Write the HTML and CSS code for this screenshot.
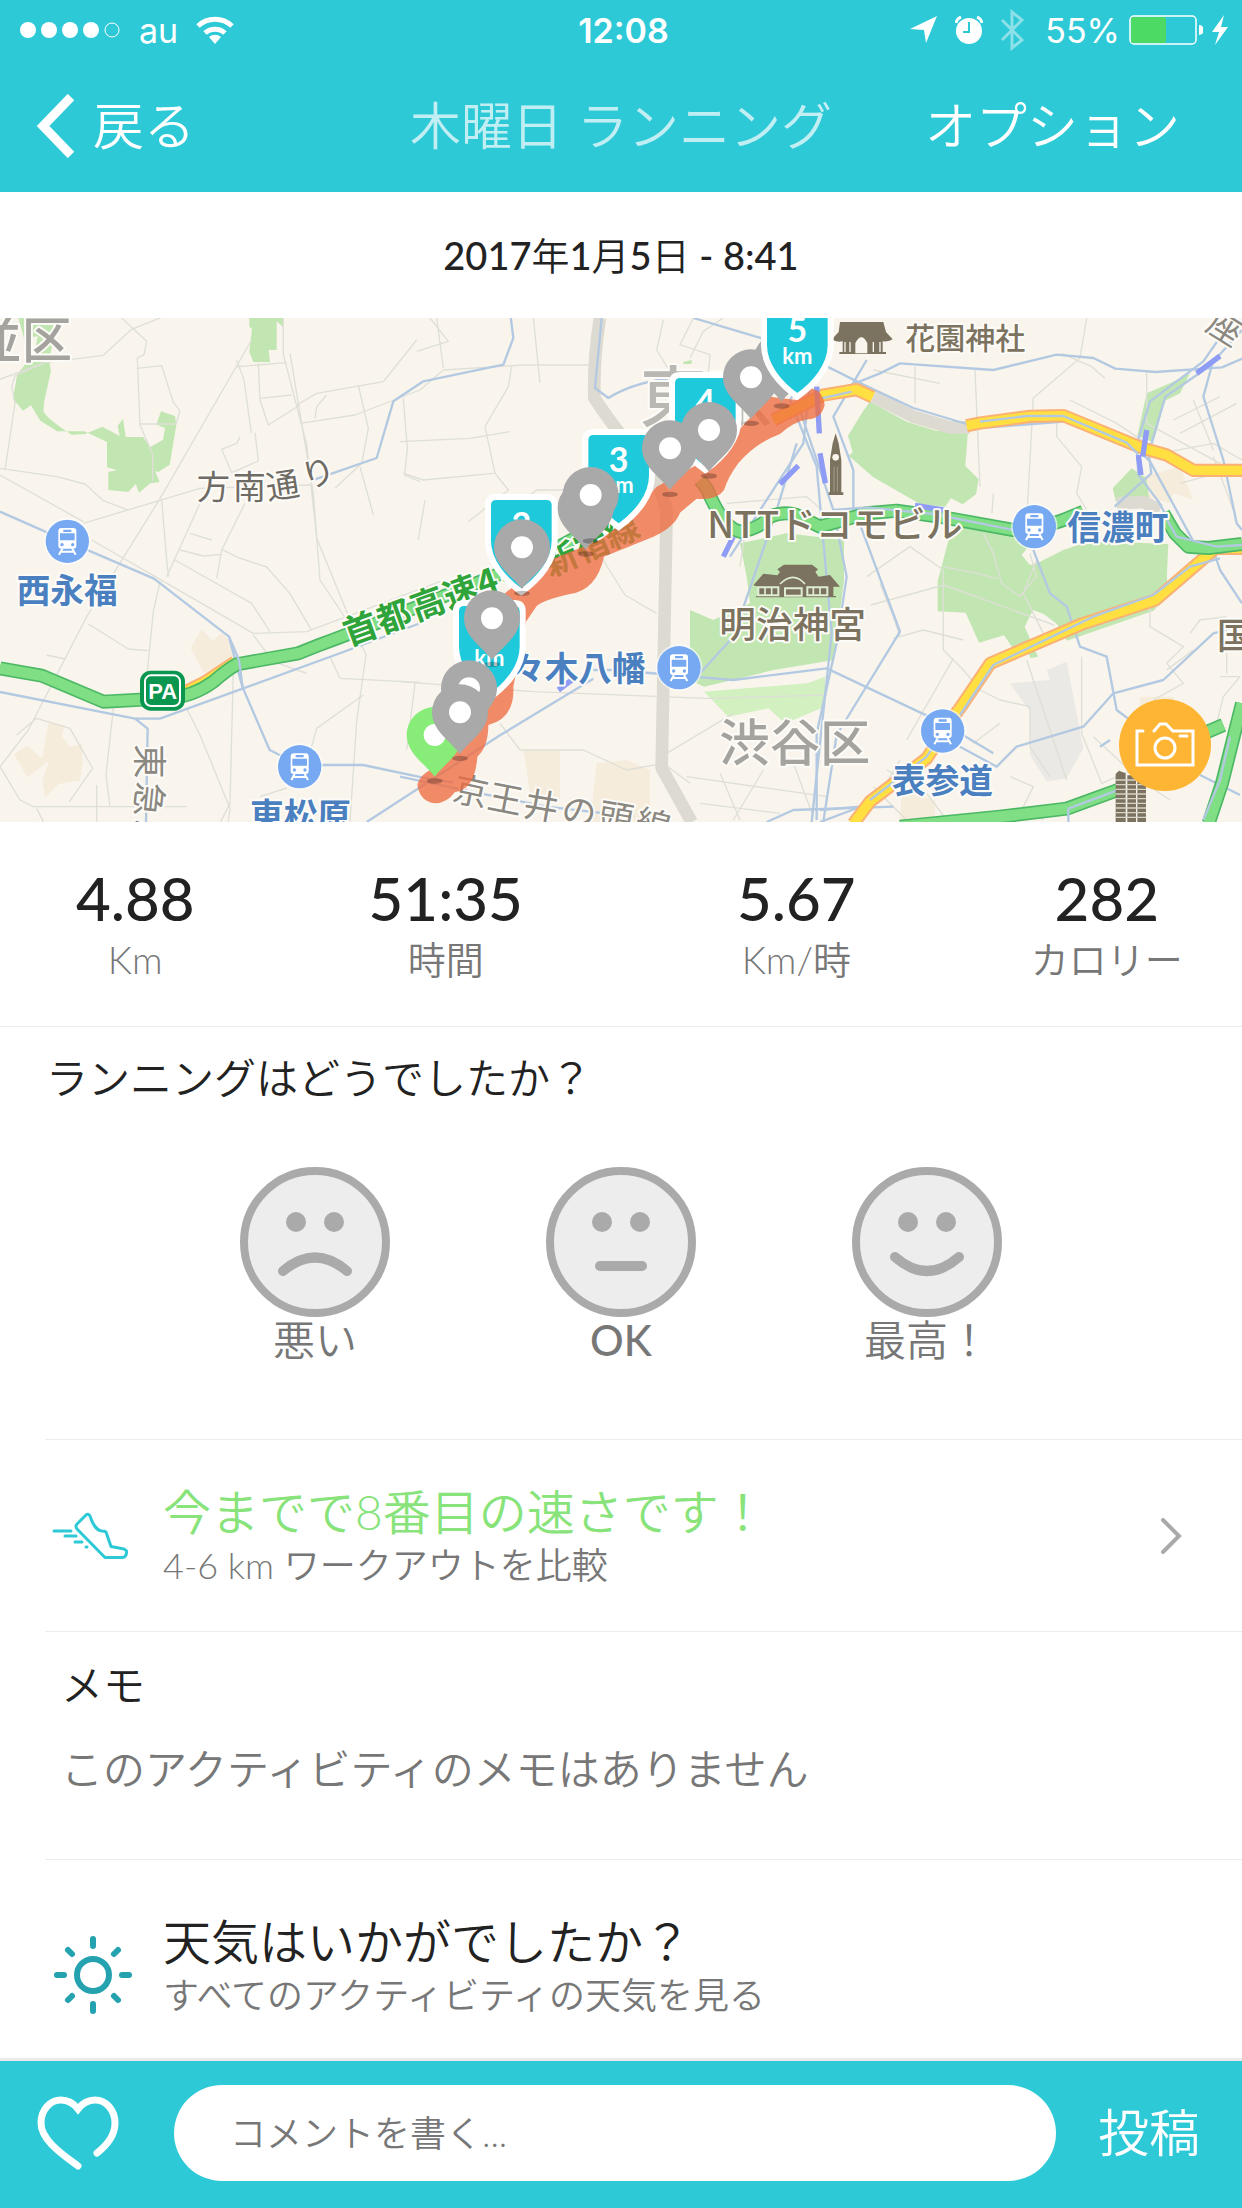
FILE: index.html
```html
<!DOCTYPE html>
<html lang="ja">
<head>
    <meta charset="UTF-8">
    <meta name="viewport" content="width=device-width, initial-scale=1.0">
    <title>木曜日 ランニング</title>
    <link rel="stylesheet" href="styles.css">
</head>
<body>
    <header class="header">
        <div class="status-bar">
            <div class="status-left">
                <svg class="signal" viewBox="0 0 102 18" width="102" height="18">
                    <circle cx="9" cy="9" r="8"/><circle cx="30" cy="9" r="8"/><circle cx="51" cy="9" r="8"/><circle cx="72" cy="9" r="8"/>
                    <circle class="empty" cx="93" cy="9" r="7"/>
                </svg>
                <span>au</span>
                <svg viewBox="0 0 38 28" width="38" height="28">
                    <path d="M2 10a25 25 0 0 1 34 0" fill="none" stroke="#fff" stroke-width="5"/>
                    <path d="M9 17a15 15 0 0 1 20 0" fill="none" stroke="#fff" stroke-width="5"/>
                    <path d="M19 28l-6-7a9 9 0 0 1 12 0z" fill="#fff"/>
                </svg>
            </div>
            <time class="clock">12:08</time>
            <div class="status-right">
                <svg viewBox="0 0 28 28" width="28" height="28"><path d="M0 13L27 0 16 27 14 14z" fill="#fff"/></svg>
                <svg class="alarm" viewBox="0 0 28 28" width="28" height="28">
                    <circle cx="14" cy="15" r="13" fill="#fff"/>
                    <path d="M1 7a8 8 0 0 1 5-6M27 7a8 8 0 0 0-5-6" fill="none" stroke="#fff" stroke-width="3"/>
                    <path d="M14 6v10H8" fill="none" stroke="#2dc9d7" stroke-width="2"/>
                </svg>
                <svg class="bluetooth" viewBox="0 0 24 42" width="24" height="42"><path d="M2 11l20 20-10 8V3l10 8L2 31" fill="none" stroke="#fff" stroke-width="3"/></svg>
                <span>55%</span>
                <svg viewBox="0 0 74 30" width="74" height="30">
                    <rect x="1" y="1" width="66" height="28" rx="4" fill="none" stroke="#fff" stroke-width="1.5"/>
                    <rect x="2" y="2" width="35" height="26" rx="2" fill="#4cd964"/>
                    <path d="M70 10a5 5 0 0 1 0 10z" fill="#fff"/>
                </svg>
                <svg viewBox="0 0 16 30" width="16" height="30"><path d="M12 0L0 17h7L3 30l13-18H9z" fill="#fff"/></svg>
            </div>
        </div>
        <nav class="nav">
            <a class="nav-back" href="#">
                <svg viewBox="0 0 40 64" width="40" height="64"><path d="M35 3L7 32l28 29" fill="none" stroke="#fff" stroke-width="9"/></svg>
                戻る
            </a>
            <h1 class="nav-title">木曜日 ランニング</h1>
            <button class="nav-options" type="button">オプション</button>
        </nav>
    </header>

    <main class="content">
        <p class="date">2017<span>年</span>1<span>月</span>5<span>日</span> - 8:41</p>

        <div class="map">
            <svg class="map-canvas" viewBox="0 24 3726 1512">
                <defs>
                    <g id="station">
                        <circle r="70" fill="#fff" opacity=".6"/>
                        <circle r="65" fill="#76a9f1"/>
                        <rect x="-27" y="-40" width="54" height="62" rx="9" fill="#fff"/>
                        <path d="M-12-35h24v7h-24zM-22-24h44V-3h-44z" fill="#76a9f1"/>
                        <circle cx="-16" cy="10" r="5" fill="#76a9f1"/><circle cx="16" cy="10" r="5" fill="#76a9f1"/>
                        <path d="M-15 22l-10 18M15 22l10 18M-18 31h36" stroke="#fff" stroke-width="6"/>
                    </g>
                    <g id="pin">
                        <ellipse cy="138" rx="24" ry="8" fill="#000" opacity=".25"/>
                        <path d="M0 125C-30 85-84 55-84 0A84 84 0 0 1 84 0C84 55 30 85 0 125z"/>
                        <circle r="33" fill="#fff"/>
                    </g>
                    <path id="shield" d="M-100 34Q-100 9-75 9H75Q100 9 100 34V140C100 200 55 255 0 294C-55 255-100 200-100 140z"/>
                </defs>
                <rect y="24" width="3726" height="1512" fill="#f9f5ed"/>

                <!-- built-up blocks -->
                <g class="block">
                    <path d="M572 1015l32-57 35 35 25-25 45 45-8 40-90 35z"/>
                    <path d="M145 1240l50 5-10 35 25 30 35-8 3 60-8 50-65 10-40 40-8-50 20-60-65 50-40-70 40-25 45 40z"/>
                    <path d="M1570 1320h110v150l-90-20-10-70z"/>
                    <path d="M1790 1360l90-10 70 30v156h-180z"/>
                    <path d="M3430 500l110-30 40 100-60-20-10 30-70-20z"/>
                    <path d="M2705 1440l100 30v66h-105z"/>
                    <path d="M3420 1160l100 0 20 50-120 40z"/>
                </g>
                <path d="M3030 1120l120-10-10-30 60-25 50 260-50 90-60 10-50-80v-130z" fill="#ebe9e5"/>

                <!-- parks -->
                <g class="park">
                    <path d="M55 24h105v60l-12 70 5 28-20 90-3 30q5 20 85 72l40-2 52-22 52 28-6-30 16-22 8 55h52l22 30 38-22 6-35-26-10 14-40 42 14 4 28-20 118-34 22-10-2 14 32-28 4-34 28-10-26-22 24-60-6v-54l26-6-30-8v-76l-68-32h-82l-50-32-28-46-24 16-30-36 12-70 32-44 20-14 10-60-40 10z"/>
                    <path d="M748 24h102l2 30-22-20v86h-24l4 36h-50l-12-30 8-70-8-5z"/>
                    <path d="M2220 700l140-30 172 20v120l-30 240-180 30-210 50-42-20 0-210 70 30 110-50-10-80z"/>
                    <path d="M2588 305l22-30 110 60 90 28 94 0-8 105 40 40-8 45-40 30-35-18-18 25-75-8-140-80-74-65 12-10-14-50z"/>
                    <path d="M2855 655l80-10 110 30 40 35-20 25 25 30 30-10 70-35 80-28 235 10-4 90v60l-40 50-260 90-30-50-40-30-32-12-25 50 40 90-22 5-20-45-28 22-32-46-75 22-40-90-84-4v-90z"/>
                    <path d="M3440 250l70-30 60-30-30 60-45 22-35 125-48-20z"/>
                    <path d="M3395 475l45 30 8 70-100 0-10-40z"/>
                    <path d="M2050 155l25-5v12h-25z"/>
                </g>
                <path d="M2112 1145l310-25 53-20v90l-120 50-50-45-120 25z" fill="#d2f0c0"/>

                <!-- side streets -->
                <g class="street">
                    <path d="M0 208l135-50 175-22 85-78 85-34M365 24l75 70-8 40-20 10 8 200 38 90v80"/>
                    <path d="M485 570l16 190 5 40M35 230l10 50-30 200M135 158l-90 40-10 32M480 815l-20 90-18 180-10 60"/>
                    <path d="M0 475l170 25 85 22 55 50 75 28M0 495l250 140M250 640l350-105 330-10M480 566L260 920 85 1260 0 1370"/>
                    <path d="M755 90L480 566M710 150l22 60 22 160M720 380l-10 20-45 18 30 70 80-35-10-85M775 160l5 110 25 75 95-60M780 265l95-10M710 170l150-12"/>
                    <path d="M850 24v110l70 270 30 280 98 240 50 110-28 200-20 300M870 130l70 420 20 260 100 150"/>
                    <path d="M900 340l165-25 195-75M890 285l60-35 200-35 100-125M1075 225l30 130-20 105-80 75M1080 470l40 145M945 325l5-35 30-35M1210 265l12 150-8 80 46 20"/>
                    <path d="M525 750l230 130 55 85M665 718l50 25 85 28 70 80 65 110M600 580l-100 220M735 580l-70 140-15 85M540 720l70 18 55-5M275 690l330 190 155 90 160-5 400-150"/>
                    <path d="M265 942l120 75 60 5M560 1195l40 80 90 220-5 40M340 1195l-22 200 12 96M0 1370l60 100 40 20h460M50 1275l60-50 100 30 68 120-70 100"/>
                    <path d="M1090 1155l-140 100-25 90M1020 1105l240 12M780 1460l80-26M140 1035l55 12M570 670l65 20M410 175l75-8 35 110 20 25-12 40h-110"/>
                    <path d="M990 1040l30 65M760 975l60 80 100 35M290 1425v110M110 1495l20 40M700 1080l-10 400-28 55"/>
                    <path d="M1290 24l55 70-95 30M1310 24l20 150M1600 24l20 195M1330 180l-70 60M1200 395l210-10 120-20M1330 180l240-15M1455 350l30 140M1455 350l70-120 10-60M1485 490l40 50-120 95"/>
                    <path d="M1210 490l60 20 210-20M1255 690l20-120M1570 165h200M2080 24l-40 80 90 30-10 120M2170 24l-60 40-40 80M1990 30l-20 90 50 80M1530 600l80-60h110"/>
                    <path d="M2180 580l240-20 80 70M1800 735l75 120 95 55M1200 1115l400 30 520 20 360-10M1560 1320l190 0 130 60 110-20 80 60M1245 1120l-25 200M1500 1240l60 80"/>
                    <path d="M2000 1330l200-120M2060 1400l420 60M2100 1480l240 30M2160 1390l60 140M2290 1380l-90 150M2380 1360l60 160M2240 640l-20 130"/>
                    <path d="M2745 170l0 110M2620 180l200 40M3185 130l90 40 40 35M3260 24l-20 120-140 120-20 370M2925 180l15 350M2980 550l-4 60"/>
                    <path d="M3210 270l140 70 90 60M3170 300v80l75 90-15 80 30 50M2600 800l130-90 100 70v240l60 60 50 60 60 30 90 20v120l60 90"/>
                    <path d="M2612 885l220-60 330 120M2680 985l90-25 120 30M2860 1045L2720 1290M3080 1050l120 360M3245 1040v230l60 150 90-40"/>
                    <path d="M2640 820l40 100 20 60M2830 770l100 20 60 16M2950 670l30 60 25 90 55 40 50-60-20-70M3110 750l-40 100 60 120"/>
                    <path d="M3450 890v60l100 60-50 50 50 60-90 50M3570 970l30-40 80-10M3500 1080l80-60M3680 1030l0 60M3660 1100l60 0-50 60-20 80"/>
                    <path d="M3440 180v160l220 120M3520 330l140-70M3540 370l170-90M3480 430l160-30 86 50M3540 520l110-30M3580 270l60 150M3640 440l60 160"/>
                    <path d="M2660 1380l120 70 60 80M2620 1430l100 100M2700 1350l-60 100M2920 1300l80-60M3030 1400l70 30-30 60 60 40M3280 1280l140 130 90 60"/>
                </g>

                <!-- closed and wide roads -->
                <g class="wide-road">
                    <path d="M1800 24q-20 120-17 240 60 90 105 140 90 90 112 200l-15 770 90 162"/>
                    <path d="M2620 260l120 60 110 32h60M3350 580l80-4 50 24"/>
                </g>

                <!-- railways -->
                <g class="rail">
                    <path d="M0 605l202 89 260 112 225 174 40 150 82 190 90 45h190l180 38 90 14"/>
                    <path d="M0 1146l405 80h75l550-200 240-90"/>
                    <path d="M405 1226l38 30-5 280M1100 1536l200-130 200-130 280-170M1780 1080h60l360 30 280-35 350 165 150 90"/>
                    <path d="M945 508l185-64 50-170 90-60 240-50 30-80-10-80M1805 24l-20 210 40 30q80-50 200-60M2080 24l270 80 240 120 150 70 200 60 260-20 190 60 60 60 130 240 120 30"/>
                    <path d="M2600 150l-100 170 60 160v110l140 375-190 310-40 260-20 210M2500 60l-130 210 80 200 45 500-60 566M2390 400l-60 200-130 380-100 110"/>
                    <path d="M2400 300l100 300 40 200-30 200-60 270v260M2430 220l-20 180-220 340M2440 270l200-80 60-30 280 20 190-46 110 10 66 32 120 10 200-14 70-30"/>
                    <path d="M3700 24l-90 130-160 120-40 130 5 90 60 80 50 90 50 40 60 10 86-10M3726 60l-100 110-130 90-50 170 8 60-110 100"/>
                    <path d="M3640 150l-30 110 60 190 40 190 16 20M3100 720l50 130 50 40 40 120 80 30 30 160 80 60M2880 1310l110 60 60-60 200-60 90-100 150-40 150-140 40-10"/>
                    <path d="M3640 720l20 60 66 100M3600 1395l120 60M3300 1310l30-20M2460 1536l160-60M2460 1500l120-10"/>
                    <path d="M1200 1400l240 50 200 40 260 30M2300 1536l80-36 300-10"/>
                </g>

                <!-- trunk roads -->
                <g class="trunk-edge">
                    <path d="M2320 330l150-75 100-16 48 22M2900 347l40-8 150-20 100-2 240 98 70 20 80 46h150M3726 715l-80 0-180 155-220 72-275 118-95 140M2875 1200l-95 145-170 130-50 66M555 1146l60-30 90-60"/>
                </g>
                <g class="trunk">
                    <path d="M2320 330l150-75 100-16 48 22M2900 347l40-8 150-20 100-2 240 98 70 20 80 46h150M3726 715l-80 0-180 155-220 72-275 118-95 140M2875 1200l-95 145-170 130-50 66M555 1146l60-30 90-60"/>
                </g>
                <g class="rail">
                    <path d="M2465 265l90-20M2940 335l140-17h110l190 80 35 35M3660 745l-90 25-110 85-180 65-300 145-100 150M2870 1210l-90 130-170 130M3640 730l30-20 60-5"/>
                </g>

                <!-- expressways -->
                <g class="expressway-edge">
                    <path d="M0 1075l125 22 185 78 190-10q80-5 140-50 40-35 70-52l185-33 60-24q160-60 245-95l400-160 300-160"/>
                    <path d="M2100 510l20 25q50 120 100 130 60-10 90-45 50-20 90 0l60 30 140-40 90-8 140 20 210 38 60 0 90-30 60-25M3490 610l35 60 40 40 60 4 101-12"/>
                    <path d="M2700 1550l300-30 200-24 170-62M3600 1275l70-30M3726 1180l-60 240-40 120"/>
                </g>
                <g class="expressway">
                    <path d="M0 1075l125 22 185 78 190-10q80-5 140-50 40-35 70-52l185-33 60-24q160-60 245-95l400-160 300-160"/>
                    <path d="M2100 510l20 25q50 120 100 130 60-10 90-45 50-20 90 0l60 30 140-40 90-8 140 20 210 38 60 0 90-30 60-25M3490 610l35 60 40 40 60 4 101-12"/>
                    <path d="M2700 1550l300-30 200-24 170-62M3600 1275l70-30M3726 1180l-60 240-40 120"/>
                </g>
                <g class="rail">
                    <path d="M687 980l30 70 12 90M2500 600l100-8 200 20 250 50 100-16M3490 610l40 70 120 30 76-5M3205 1536l0-40 160-60M3690 1280l-30 130-50 120"/>
                </g>
                <g class="platform">
                    <path d="M2450 230l8 140M2460 430l16 90M2340 522l55-55M2745 586l85 14M3440 360l-12 80M3415 435l8 60M3590 190l70-52M2170 740l30-60M1675 1140l40-30"/>
                </g>

                <!-- landmarks -->
                <g fill="#7b735f">
                    <path d="M2520 36h130l8 30 20 22q-10 8-30 6v32h10v6h-140v-6h10v-32q-20 4-32-6l20-22z"/>
                    <path d="M2486 555v-8h4V450l8-50 9-30 9 30 8 50v97h6v8z"/>
                    <path d="M2260 826l30-35 42 5 8-10-8-8 20-14h84l18 14-8 8 10 14 34-5 30 35-20 0v28h8v4h-240v-4h8v-28z"/>
                    <path d="M3347 1392l10-10 20 8v146h-30zM3382 1396h26v140h-26zM3412 1396h26v140h-26z"/>
                </g>
                <path d="M2568 100q16-32 32 0v28h-32zM2535 96v30M2550 96v30M2620 96v30M2640 96v30" fill="#f9f5ed" stroke="#f9f5ed" stroke-width="4"/>
                <path d="M2275 832h60v24h-60zM2422 832h60v24h-60zM2355 835h50v22h-50z" fill="none" stroke="#dfeed2" stroke-width="6"/>
                <path d="M2295 832v26M2315 832v26M2440 832v26M2460 832v26M2340 822q40-40 75 0" fill="none" stroke="#dfeed2" stroke-width="5"/>
                <circle cx="2507" cy="442" r="10" fill="#f9f5ed"/>
                <path d="M2502 470v75M2512 470v75" stroke="#a39c8b" stroke-width="3"/>
                <path d="M3347 1410h91M3347 1424h91M3347 1438h91M3347 1452h91M3347 1466h91M3347 1480h91M3347 1494h91M3347 1508h91M3347 1522h91" stroke="#d8d3c6" stroke-width="4"/>

                <!-- place names -->
                <text class="district" x="-86" y="144">並区</text>
                <text class="district" x="2158" y="1352">渋谷区</text>
                <text class="city" x="1920" y="336">東京</text>
                <text class="road-name" x="590 698 804 920" y="566 566 570 540" rotate="0 0 -9 -20">方南通り</text>
                <text class="line-name" x="412 415 424" y="1302 1412 1516" rotate="90 96 112">東急世</text>
                <text class="line-name" x="1354 1458 1566 1680 1790 1900" y="1470 1494 1516 1534 1550 1568" rotate="12 11 10 9 10 14">京王井の頭線</text>
                <text class="line-name" x="3612" y="58" transform="rotate(32 3612 58)">座</text>
                <text class="expressway-name" x="1046 1146 1248 1346 1446 1520 1650 1744 1834" y="1008 972 934 898 860 850 802 760 718" rotate="-20 -20 -20 -20 -20 -22 -24 -24 -24">首都高速4号新宿線</text>
                <text class="station-name" x="50" y="880">西永福</text>
                <text class="station-name" x="750" y="1554">東松原</text>
                <text class="station-name" x="1432" y="1112">代々木八幡</text>
                <text class="station-name" x="3202" y="689">信濃町</text>
                <text class="station-name" x="2676" y="1450">表参道</text>
                <text class="landmark" x="2122" y="685">NTTドコモビル</text>
                <text class="landmark" x="2158" y="985">明治神宮</text>
                <text class="landmark" x="3650" y="1018">国</text>
                <text class="landmark small" x="2716" y="118">花園神社</text>

                <rect x="420" y="1082" width="135" height="120" rx="32" fill="#0b9650"/>
                <rect x="435" y="1096" width="105" height="92" rx="18" fill="none" stroke="#fff" stroke-width="6"/>
                <text class="parking" x="488" y="1167">PA</text>

                <use href="#station" x="202" y="694"/>
                <use href="#station" x="899" y="1370"/>
                <use href="#station" x="2037" y="1073"/>
                <use href="#station" x="3103" y="650"/>
                <use href="#station" x="2828" y="1263"/>

                <!-- route and markers -->
                <g transform="translate(1200 0)">
                    <path class="route" d="M105 1480Q60 1475 52 1425Q60 1390 110 1372L200 1260 240 1000 262 900 320 845 450 750 600 690 680 630 770 530 880 470 960 425 1030 345 1110 260 1190 270 1235 235Q1270 245 1274 285Q1265 325 1225 328Q1180 335 1140 372Q1065 400 1015 460Q985 500 972 540Q950 572 890 566L840 608Q825 650 760 680L612 740Q590 840 510 852Q430 870 410 888L378 935 340 1130Q345 1225 265 1245Q265 1310 232 1340Q225 1440 165 1446Q140 1480 105 1480z"/>
                    <g fill="#a9a9a9">
                        <use href="#pin" x="1145" y="150"/>
                    </g>
                    <g class="shield">
                        <use href="#shield" x="916" y="186"/><use href="#shield" x="656" y="357"/>
                        <use href="#shield" x="364" y="552"/><use href="#shield" x="268" y="870"/>
                    </g>
                    <g class="shield-text">
                        <text class="km-number" x="916" y="312">4</text><text x="916" y="379">km</text>
                        <text class="km-number" x="656" y="485">3</text><text x="656" y="550">km</text>
                        <text class="km-number" x="364" y="680">2</text><text x="364" y="745">km</text>
                        <text class="km-number" x="268" y="998">1</text><text x="268" y="1068">km</text>
                    </g>
                    <g fill="#a9a9a9">
                        <use href="#pin" x="1053" y="202"/>
                        <use href="#pin" x="927" y="360"/>
                        <use href="#pin" x="810" y="415"/>
                        <use href="#pin" x="557" y="594"/>
                        <use href="#pin" x="572" y="555"/>
                        <use href="#pin" x="366" y="712"/>
                        <use href="#pin" x="276" y="925"/>
                        <use href="#pin" x="207" y="1135"/>
                        <use href="#pin" x="104" y="1275" fill="#87ec78"/>
                        <use href="#pin" x="180" y="1207"/>
                    </g>
                    <use class="shield" href="#shield" x="1192" y="-34"/>
                    <g class="shield-text">
                        <text class="km-number" x="1192" y="95">5</text><text x="1192" y="161">km</text>
                    </g>
                </g>
            </svg>
            <button class="camera-btn" type="button" aria-label="写真を追加">
                <svg viewBox="0 0 60 46" width="60" height="46">
                    <path d="M8 9H2v34h56V9H38l-7-7H25l-6 7M45 14h7" fill="none" stroke="#fff" stroke-width="3" stroke-linecap="round"/>
                    <circle cx="30" cy="26" r="10" fill="none" stroke="#fff" stroke-width="3"/>
                </svg>
            </button>
        </div>

        <dl class="stats">
            <div class="stat"><dd>4.88</dd><dt>Km</dt></div>
            <div class="stat"><dd>51:35</dd><dt>時間</dt></div>
            <div class="stat"><dd>5.67</dd><dt>Km/時</dt></div>
            <div class="stat"><dd>282</dd><dt>カロリー</dt></div>
        </dl>

        <section class="mood">
            <h2 class="label-text">ランニングはどうでしたか？</h2>
            <div class="mood-options">
                <button class="mood-btn" type="button">
                    <svg class="face" viewBox="0 0 150 150" width="150" height="150">
                        <circle class="face-bg" cx="75" cy="75" r="71"/>
                        <circle cx="56" cy="55" r="10"/><circle cx="94" cy="55" r="10"/>
                        <path d="M43 104Q75 77 107 104"/>
                    </svg>
                    悪い
                </button>
                <button class="mood-btn mood-ok" type="button">
                    <svg class="face" viewBox="0 0 150 150" width="150" height="150">
                        <circle class="face-bg" cx="75" cy="75" r="71"/>
                        <circle cx="56" cy="55" r="10"/><circle cx="94" cy="55" r="10"/>
                        <path d="M54 99h42"/>
                    </svg>
                    OK
                </button>
                <button class="mood-btn" type="button">
                    <svg class="face" viewBox="0 0 150 150" width="150" height="150">
                        <circle class="face-bg" cx="75" cy="75" r="71"/>
                        <circle cx="56" cy="55" r="10"/><circle cx="94" cy="55" r="10"/>
                        <path d="M43 90Q75 118 107 90"/>
                    </svg>
                    最高！
                </button>
            </div>
        </section>

        <a class="row compare" href="#">
            <svg class="row-icon" viewBox="0 0 84 84" width="84" height="84">
                <g fill="none" stroke="#2dc9d7" stroke-width="3" stroke-linejoin="round" stroke-linecap="round">
                    <path d="M35 21L26 30Q24 32 26 35L54 63.500H71Q76 63 75.500 57Q75 56 73 55L60 52.500 55 38Q54 37 51 37C45 36 42 31 39 22Q37 19 35 21z"/>
                    <path d="M3 37h17M14 42h11M24 48h7M35 53h1"/>
                </g>
            </svg>
            <div class="row-text">
                <h2 class="green">今までで8番目の速さです！</h2>
                <p>4-6 km ワークアウトを比較</p>
            </div>
            <svg viewBox="0 0 22 36" width="22" height="36"><path d="M3 2l16 16L3 34" fill="none" stroke="#aaa" stroke-width="4" stroke-linecap="round"/></svg>
        </a>

        <section class="row memo">
            <h2 class="label-text">メモ</h2>
            <p class="label-text muted">このアクティビティのメモはありません</p>
        </section>

        <a class="row weather" href="#">
            <svg class="row-icon" viewBox="0 0 84 84" width="84" height="84">
                <g fill="none" stroke="#25a2b0" stroke-width="6" stroke-linecap="round">
                    <circle cx="42" cy="42" r="16"/>
                    <path d="M42 6v7M42 71v7M6 42h7M71 42h7M17 17l4 4M63 63l4 4M17 67l4-4M63 21l4-4"/>
                </g>
            </svg>
            <div class="row-text">
                <h2>天気はいかがでしたか？</h2>
                <p>すべてのアクティビティの天気を見る</p>
            </div>
        </a>
    </main>

    <form class="comment-bar">
        <button class="like-btn" type="button" aria-label="いいね">
            <svg viewBox="0 0 84 76" width="84" height="76"><path d="M42 71C26 59 5 45 5 28C5 15 14 5 25 5Q35 5 42 14Q49 5 59 5C70 5 79 15 79 28Q79 44 61 58" fill="none" stroke="#fff" stroke-width="7" stroke-linecap="round"/></svg>
        </button>
        <input class="comment-input" type="text" placeholder="コメントを書く..." aria-label="コメント">
        <button class="post-btn" type="submit">投稿</button>
    </form>
</body>
</html>
```
FILE: styles.css
```css
* {
    box-sizing: border-box;
}
body {
    margin: 0;
    min-height: 100vh;
    display: flex;
    flex-direction: column;
    font-family: Lato, 'Noto Sans CJK JP', sans-serif;
    font-weight: 350;
    color: #222;
    background: #fff;
}
h1, h2, p, dl, dd {
    margin: 0;
    font-weight: inherit;
}
a {
    color: inherit;
    text-decoration: none;
}
button {
    padding: 0;
    border: none;
    background: none;
    color: inherit;
    font: inherit;
    cursor: pointer;
}
svg {
    display: block;
    flex: none;
}

/* header */
.header {
    background: #2dc9d7;
    color: #fff;
}
.status-bar {
    height: 60px;
    padding: 0 14px 0 19px;
    display: grid;
    grid-template-columns: 1fr auto 1fr;
    align-items: center;
    font-family: Inter, sans-serif;
    font-size: 34px;
    font-weight: 400;
}
.status-left, .status-right {
    display: flex;
    align-items: center;
    gap: 18px;
}
.status-right {
    justify-content: flex-end;
    gap: 9px;
}
.alarm {
    margin: 0 8px;
}
.bluetooth {
    margin-right: 12px;
    opacity: .45;
}
.signal {
    fill: #fff;
}
.signal .empty {
    fill: none;
    stroke: #fff;
    stroke-width: 1;
}
.clock {
    font-weight: 600;
}
.nav {
    height: 132px;
    padding: 0 36px;
    display: grid;
    grid-template-columns: 1fr auto 1fr;
    align-items: center;
    font-size: 51px;
    line-height: 60px;
}
.nav-back {
    display: flex;
    align-items: center;
    gap: 17px;
}
.nav-title {
    font-size: 51px;
    opacity: .7;
}
.nav-options {
    justify-self: end;
    margin-right: 26px;
}

/* map */
.content {
    flex: 1;
}
.date {
    padding: 38px 0;
    font-size: 38px;
    line-height: 50px;
    font-weight: 500;
    text-align: center;
}
.date span {
    font-weight: 350;
}
.map {
    position: relative;
}
.map-canvas {
    width: 100%;
    height: auto;
    font-family: 'Noto Sans CJK JP', sans-serif;
}
.block {
    fill: #f5ecdc;
}
.park {
    fill: #c2e6b2;
}
.street, .rail, .wide-road, .trunk, .trunk-edge, .expressway, .expressway-edge, .platform {
    fill: none;
    stroke-linejoin: round;
}
.street {
    stroke: #dedfd7;
    stroke-width: 4;
}
.wide-road {
    stroke: #dddad1;
    stroke-width: 38;
}
.rail {
    stroke: #b3c9e2;
    stroke-width: 7;
}
.platform {
    stroke: #8f9cf5;
    stroke-width: 16;
}
.trunk-edge {
    stroke: #fbb074;
    stroke-width: 40;
}
.trunk {
    stroke: #ffe040;
    stroke-width: 28;
}
.expressway-edge {
    stroke: #4cb866;
    stroke-width: 42;
}
.expressway {
    stroke: #80de84;
    stroke-width: 32;
}
.map-canvas text {
    paint-order: stroke;
    stroke: #fdfbf7;
    stroke-width: 12;
    stroke-linejoin: round;
}
.district {
    font-size: 151px;
    font-weight: 500;
    fill: #a5a39e;
}
.city {
    font-size: 200px;
    font-weight: 500;
    fill: #bab8b3;
}
.road-name {
    font-size: 100px;
    font-weight: 400;
    fill: #6f6b65;
}
.line-name {
    font-size: 104px;
    font-weight: 400;
    fill: #8a8880;
}
.expressway-name {
    font-size: 102px;
    font-weight: 700;
    fill: #2fa43a;
}
.station-name {
    font-size: 101px;
    font-weight: 700;
    fill: #4a7fc0;
}
.landmark {
    font-size: 110px;
    font-weight: 500;
    fill: #7b735f;
}
.small {
    font-size: 90px;
}
.map-canvas .parking {
    font-family: 'Liberation Sans Narrow', 'Liberation Sans', sans-serif;
    font-size: 66px;
    font-weight: 700;
    fill: #fff;
    stroke: none;
    text-anchor: middle;
}
.route {
    fill: #ee6b40;
    opacity: .78;
}
.shield {
    fill: #1ec9db;
    stroke: #fff;
    stroke-width: 18;
}
.map-canvas .shield-text text {
    font-family: Lato, sans-serif;
    font-size: 66px;
    font-weight: 700;
    fill: #fff;
    stroke: none;
    text-anchor: middle;
}
.map-canvas .shield-text .km-number {
    font-size: 102px;
}
.camera-btn {
    position: absolute;
    right: 31px;
    bottom: 31px;
    width: 92px;
    height: 92px;
    border-radius: 50%;
    background: #ffb534;
    display: flex;
    align-items: center;
    justify-content: center;
}

/* stats */
.stats {
    display: grid;
    grid-template-columns: 27fr 35fr 35fr 27fr;
    padding: 44px 0;
    border-bottom: 1px solid #ebecec;
    text-align: center;
}
.stat {
    display: flex;
    flex-direction: column;
    gap: 6px;
}
.stat dd {
    font-size: 60px;
    line-height: 64px;
    font-weight: 500;
}
.stat dt {
    font-size: 38px;
    line-height: 46px;
    color: #777;
}

/* mood */
.label-text {
    font-size: 42px;
    line-height: 50px;
}
.mood {
    padding: 26px 0 75px;
}
.mood .label-text {
    padding: 0 46px;
}
.mood-options {
    display: flex;
    justify-content: center;
    margin-top: 64px;
}
.mood-btn {
    flex: 0 1 306px;
    display: flex;
    flex-direction: column;
    align-items: center;
    font-size: 42px;
    line-height: 47px;
    color: #777;
}
.mood-ok {
    font-weight: 500;
}
.face {
    fill: #aaa;
}
.face .face-bg {
    fill: #ededed;
    stroke: #aaa;
    stroke-width: 8;
}
.face path {
    fill: none;
    stroke: #aaa;
    stroke-width: 10;
    stroke-linecap: round;
}

/* rows */
.row {
    display: flex;
    margin-left: 45px;
    border-top: 1px solid #ebecec;
}
.row-icon {
    margin: 0 28px 0 6px;
}
.row-text {
    flex: 1;
    display: flex;
    flex-direction: column;
    gap: 3px;
}
.row-text h2 {
    font-size: 48px;
    line-height: 56px;
}
.row-text p {
    font-size: 36px;
    line-height: 44px;
    color: #777;
}
.row-text .green {
    color: #87e37a;
}
.compare {
    align-items: center;
    padding: 44px 60px 44px 0;
}
.memo {
    flex-direction: column;
    gap: 34px;
    padding: 28px 16px 65px;
}
.muted {
    color: #777;
}
.weather {
    align-items: flex-end;
    padding: 54px 60px 41px 0;
}

/* comment bar */
.comment-bar {
    position: sticky;
    bottom: 0;
    display: flex;
    align-items: center;
    padding: 24px 42px 27px 36px;
    border-top: 3px solid #ebebed;
    background: #2dc9d7;
    color: #fff;
}
.comment-input {
    flex: 1;
    min-width: 0;
    height: 96px;
    margin: 0 42px 0 54px;
    padding: 0 56px;
    border: none;
    border-radius: 48px;
    background: #fff;
    color: #222;
    font: inherit;
    font-size: 36px;
}
.comment-input::placeholder {
    color: #777;
    opacity: 1;
}
.post-btn {
    font-size: 51px;
    line-height: 60px;
}
```
